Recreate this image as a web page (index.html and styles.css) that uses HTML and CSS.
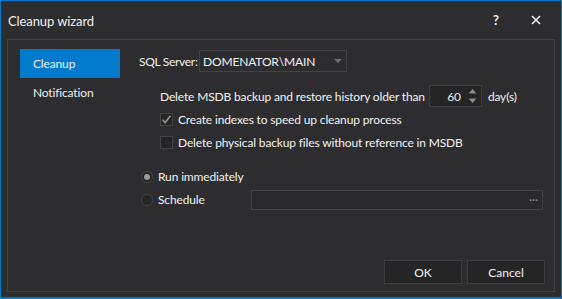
FILE: index.html
```html
<!DOCTYPE html>
<html lang="en">
<head>
    <meta charset="UTF-8">
    <title>Cleanup wizard</title>
    <link rel="stylesheet" href="styles.css">
</head>
<body>
    <div class="window">
        <div class="titlebar">
            <span class="title">Cleanup wizard</span>
            <span class="title-btn help">?</span>
            <span class="title-btn close">
                <svg width="10" height="10" viewBox="0 0 10 10"><path d="M1 1L9 9M9 1L1 9" stroke="#f1f1f1" stroke-width="1.6"/></svg>
            </span>
        </div>
        <div class="panel">
            <div class="main">
                <div class="nav">
                    <div class="nav-item active">Cleanup</div>
                    <div class="nav-item">Notification</div>
                </div>
                <div class="form">
                    <div class="row server-row">
                        <span class="label">SQL Server:</span>
                        <div class="combo">
                            <span>DOMENATOR\MAIN</span>
                            <svg width="8" height="4" viewBox="0 0 8 4"><path d="M0 0H8L4 4Z" fill="#6d6d6d"/></svg>
                        </div>
                    </div>
                    <div class="row indent days-row">
                        <span>Delete MSDB backup and restore history older than</span>
                        <div class="spin">
                            <span class="spin-value">60</span>
                            <svg width="9" height="18" viewBox="0 0 9 18"><path d="M0.5 6.5L4.5 2L8.5 6.5Z" fill="#8a8a8a"/><path d="M0.5 11.5L4.5 16L8.5 11.5Z" fill="#8a8a8a"/></svg>
                        </div>
                        <span>day(s)</span>
                    </div>
                    <div class="row indent check-row">
                        <span class="checkbox">
                            <svg width="11" height="11" viewBox="0 0 11 11"><path d="M1.5 5.8L4.2 8.5L9.5 1.8" fill="none" stroke="#9a9a9a" stroke-width="1.5"/></svg>
                        </span>
                        <span>Create indexes to speed up cleanup process</span>
                    </div>
                    <div class="row indent check-row">
                        <span class="checkbox"></span>
                        <span>Delete physical backup files without reference in MSDB</span>
                    </div>
                    <div class="row radio-row first-radio">
                        <span class="radio checked"></span>
                        <span>Run immediately</span>
                    </div>
                    <div class="row radio-row">
                        <span class="radio"></span>
                        <span class="schedule-label">Schedule</span>
                        <div class="schedule-input"><span class="dots">···</span></div>
                    </div>
                </div>
            </div>
            <div class="footer">
                <button class="btn">OK</button>
                <button class="btn">Cancel</button>
            </div>
        </div>
    </div>
</body>
</html>
```

FILE: styles.css
```css
body {
    margin: 0;
    background-color: #2d2d30;
    font-family: Lato, "Noto Sans", sans-serif;
    font-size: 12px;
    letter-spacing: -0.15px;
    color: #f1f1f1;
}
.window {
    width: 562px;
    height: 299px;
    box-sizing: border-box;
    border: 1px solid #007acc;
    border-bottom-width: 2px;
    background-color: #2d2d30;
    display: flex;
    flex-direction: column;
}
.titlebar {
    height: 38px;
    display: flex;
    align-items: center;
    padding-left: 7px;
}
.title {
    font-size: 13px;
    letter-spacing: -0.1px;
    flex: 1;
    margin-top: 1px;
}
.title-btn {
    width: 36px;
    display: flex;
    justify-content: center;
    align-items: center;
    font-weight: bold;
    font-size: 13px;
}
.help {
    margin-right: 4px;
}
.close {
    margin-right: 7px;
}
.panel {
    margin: 0 6px;
    height: 253px;
    box-sizing: border-box;
    border: 1px solid #434346;
    display: flex;
    flex-direction: column;
}
.main {
    flex: 1;
    display: flex;
    padding: 9px 11px 0 12px;
}
.nav {
    width: 100px;
    margin-right: 19px;
}
.nav-item {
    height: 29px;
    line-height: 29px;
    padding-left: 13px;
}
.nav-item.active {
    background-color: #007acc;
}
.form {
    flex: 1;
    display: flex;
    flex-direction: column;
    padding-top: 1px;
    white-space: nowrap;
}
.row {
    display: flex;
    align-items: center;
}
.indent {
    padding-left: 21px;
}
.server-row {
    height: 22px;
}
.label {
    width: 60px;
    letter-spacing: -0.3px;
}
.combo {
    width: 148px;
    height: 22px;
    box-sizing: border-box;
    border: 1px solid #434346;
    display: flex;
    align-items: center;
    justify-content: space-between;
    padding: 0 4px 0 3px;
}
.days-row {
    height: 22px;
    margin-top: 13px;
}
.spin {
    width: 53px;
    height: 22px;
    box-sizing: border-box;
    margin: 0 6px 0 4px;
    border: 1px solid #3f3f46;
    background-color: #252526;
    display: flex;
    align-items: center;
    justify-content: flex-end;
    padding-right: 4px;
}
.spin-value {
    margin-right: 7px;
}
.check-row {
    height: 23px;
}
.check-row:nth-child(3) {
    margin-top: 1px;
}
.checkbox {
    width: 13px;
    height: 13px;
    box-sizing: border-box;
    border: 1px solid #434346;
    background-color: #252526;
    margin-right: 5px;
    display: flex;
    align-items: center;
    justify-content: center;
}
.radio-row {
    height: 23px;
    padding-left: 2px;
}
.first-radio {
    margin-top: 11px;
}
.radio {
    width: 12px;
    height: 12px;
    box-sizing: border-box;
    border-radius: 50%;
    border: 1px solid #434346;
    background-color: #252526;
    margin-right: 5px;
    display: flex;
    align-items: center;
    justify-content: center;
}
.radio.checked::after {
    content: "";
    width: 6px;
    height: 6px;
    border-radius: 50%;
    background-color: #9a9a9a;
}
.schedule-label {
    width: 93px;
}
.schedule-input {
    flex: 1;
    height: 20px;
    box-sizing: border-box;
    border: 1px solid #434346;
    background-color: #2a2a2d;
    display: flex;
    align-items: center;
    justify-content: flex-end;
    padding-right: 4px;
}
.dots {
    color: #8a8a8a;
    font-size: 12px;
}
.footer {
    display: flex;
    justify-content: flex-end;
    gap: 5px;
    padding: 0 9px 7px 0;
}
.btn {
    width: 78px;
    height: 24px;
    background-color: #252526;
    border: 1px solid #3f3f46;
    color: #f1f1f1;
    font-family: Lato, "Noto Sans", sans-serif;
    font-size: 12px;
    padding: 0;
}
```
